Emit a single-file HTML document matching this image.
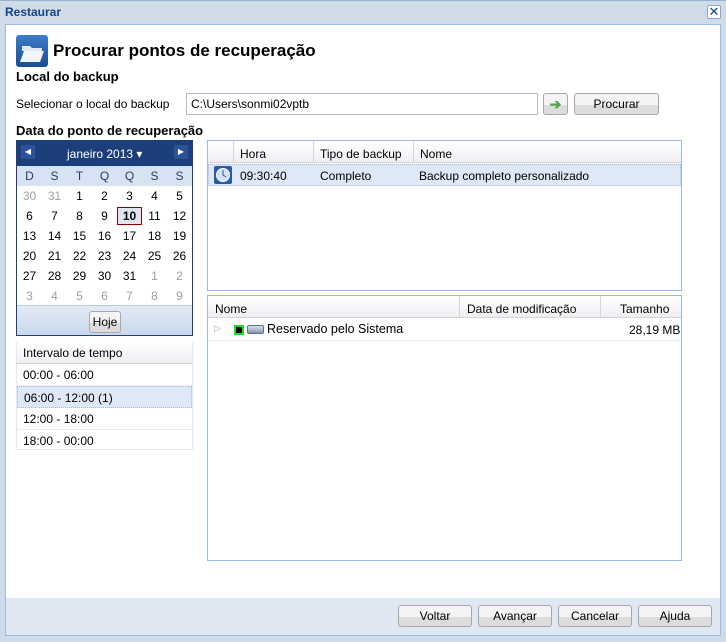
<!DOCTYPE html>
<html><head><meta charset="utf-8"><style>
*{box-sizing:border-box;margin:0;padding:0}
body{width:726px;height:642px;background:#cfdbe7;font-family:"Liberation Sans",sans-serif;font-size:12px;color:#000;position:relative;overflow:hidden}
.a{position:absolute}
.btn{position:absolute;height:22px;border:1px solid #a8a8a8;border-radius:3px;background:linear-gradient(#f6f3f6 0,#f6f3f6 55%,#dcdcdc 55%,#dcdcdc 100%);text-align:center;line-height:21px;font-size:12px}
.hd{background:linear-gradient(#fff,#f1eef3);border-bottom:1px solid #d5d5d5}
.cal td{width:25px;text-align:center;height:20px;font-size:12px}
.g{color:#a0a0a0}
</style></head><body>
<div class="a" style="left:0;top:0;width:726px;height:1px;background:#99b3cf"></div>
<div class="a" style="left:5px;top:5px;font-weight:bold;font-size:12px;color:#15428b">Restaurar</div>
<div class="a" style="left:707px;top:5px;width:14px;height:14px;border:1px solid #8aa6c8;border-radius:2px;background:#fff;color:#15428b;font-size:13px;line-height:11px;text-align:center">✕</div>
<div class="a" style="left:5px;top:24px;width:716px;height:575px;background:#fff;border:1px solid #99bbe8;border-bottom:none"></div>
<div class="a" style="left:5px;top:598px;width:716px;height:38px;background:#dfe8f2;border-left:1px solid #99bbe8;border-right:1px solid #99bbe8;border-bottom:1px solid #99bbe8"></div>
<div class="a" style="left:16px;top:35px;width:32px;height:32px;background:linear-gradient(#3d7cc6,#1b4d92);border-radius:3px"></div>
<svg class="a" style="left:16px;top:35px" width="32" height="32"><path d="M6 11h8l2 2h10v3H6z" fill="#dfe9f6"/><path d="M8 16h20l-4 11H4z" fill="#f2f6fb"/></svg>
<div class="a" style="left:53px;top:41px;font-size:17px;font-weight:bold">Procurar pontos de recuperação</div>
<div class="a" style="left:16px;top:69px;font-size:13px;font-weight:bold">Local do backup</div>
<div class="a" style="left:16px;top:97px">Selecionar o local do backup</div>
<div class="a" style="left:186px;top:93px;width:352px;height:22px;border:1px solid #b5b8c8;padding:3px 4px">C:\Users\sonmi02vptb</div>
<div class="btn" style="left:543px;top:93px;width:25px;color:#4ca84c;font-weight:bold;font-size:14px">➔</div>
<div class="btn" style="left:574px;top:93px;width:85px">Procurar</div>
<div class="a" style="left:16px;top:123px;font-size:13px;font-weight:bold">Data do ponto de recuperação</div>
<div class="a" style="left:16px;top:140px;width:177px;height:196px;border:1px solid #1e3f7a;background:#fff">
 <div style="height:25px;background:#1c3f7c;color:#fff;position:relative">
  <div class="a" style="left:4px;top:4px;width:14px;height:14px;background:#2b5198;font-size:8px;line-height:14px;text-align:center">◀</div>
  <div class="a" style="left:50px;top:6px;font-size:12px">janeiro 2013 ▾</div>
  <div class="a" style="left:157px;top:4px;width:14px;height:14px;background:#2b5198;font-size:8px;line-height:14px;text-align:center">▶</div>
 </div>
 <table class="cal" style="border-collapse:collapse;width:175px">
 <tr style="background:#d7e3f3;color:#233d6d"><td style="height:18px">D</td><td>S</td><td>T</td><td>Q</td><td>Q</td><td>S</td><td>S</td></tr>
 <tr><td class="g">30</td><td class="g">31</td><td>1</td><td>2</td><td>3</td><td>4</td><td>5</td></tr>
 <tr><td>6</td><td>7</td><td>8</td><td>9</td><td><div style="border:1px solid #8b0000;background:#dfe6f0;font-weight:bold;height:18px;line-height:16px">10</div></td><td>11</td><td>12</td></tr>
 <tr><td>13</td><td>14</td><td>15</td><td>16</td><td>17</td><td>18</td><td>19</td></tr>
 <tr><td>20</td><td>21</td><td>22</td><td>23</td><td>24</td><td>25</td><td>26</td></tr>
 <tr><td>27</td><td>28</td><td>29</td><td>30</td><td>31</td><td class="g">1</td><td class="g">2</td></tr>
 <tr><td class="g">3</td><td class="g">4</td><td class="g">5</td><td class="g">6</td><td class="g">7</td><td class="g">8</td><td class="g">9</td></tr>
 </table>
 <div class="a" style="left:0;top:164px;width:175px;height:30px;background:linear-gradient(#e3ebf6,#c9d8ec);border-top:1px solid #b9c9df"></div>
 <div class="btn" style="left:72px;top:170px;width:32px">Hoje</div>
</div>
<div class="a" style="left:16px;top:342px;width:177px;height:108px;border:1px solid #e8e8e8;border-top:none">
 <div class="hd" style="height:22px;padding:4px 6px">Intervalo de tempo</div>
 <div style="height:22px;padding:4px 6px;border-bottom:1px solid #ececec">00:00 - 06:00</div>
 <div style="height:22px;padding:4px 6px;background:#dfe8f6;border:1px dotted #a3bae9">06:00 - 12:00 (1)</div>
 <div style="height:22px;padding:4px 6px;border-bottom:1px solid #ececec">12:00 - 18:00</div>
 <div style="height:21px;padding:4px 6px">18:00 - 00:00</div>
</div>
<div class="a" style="left:207px;top:140px;width:475px;height:151px;border:1px solid #99bbe8"></div>
<div class="a hd" style="left:208px;top:141px;width:473px;height:22px"></div>
<div class="a" style="left:233px;top:141px;width:1px;height:22px;background:#d5d5d5"></div>
<div class="a" style="left:313px;top:141px;width:1px;height:22px;background:#d5d5d5"></div>
<div class="a" style="left:413px;top:141px;width:1px;height:22px;background:#d5d5d5"></div>
<div class="a" style="left:240px;top:147px">Hora</div>
<div class="a" style="left:320px;top:147px">Tipo de backup</div>
<div class="a" style="left:420px;top:147px">Nome</div>
<div class="a" style="left:208px;top:164px;width:473px;height:22px;background:#dfe8f6;border:1px dotted #a3bae9"></div>
<svg class="a" style="left:214px;top:166px" width="18" height="18"><rect width="18" height="18" rx="2" fill="#2b5aa6"/><circle cx="9" cy="9" r="6.5" fill="#cfe0f7" stroke="#fff"/><path d="M9 4v5l3 2" stroke="#2b5aa6" fill="none"/></svg>
<div class="a" style="left:240px;top:169px">09:30:40</div>
<div class="a" style="left:320px;top:169px">Completo</div>
<div class="a" style="left:419px;top:169px">Backup completo personalizado</div>
<div class="a" style="left:207px;top:295px;width:475px;height:266px;border:1px solid #99bbe8"></div>
<div class="a hd" style="left:208px;top:296px;width:473px;height:22px"></div>
<div class="a" style="left:459px;top:296px;width:1px;height:22px;background:#d5d5d5"></div>
<div class="a" style="left:600px;top:296px;width:1px;height:22px;background:#d5d5d5"></div>
<div class="a" style="left:215px;top:302px">Nome</div>
<div class="a" style="left:467px;top:302px">Data de modificação</div>
<div class="a" style="left:620px;top:302px">Tamanho</div>
<div class="a" style="left:208px;top:340px;width:473px;height:1px;background:#ececec"></div>
<div class="a" style="left:214px;top:323px;color:#aaa;font-size:9px">▷</div>
<div class="a" style="left:234px;top:325px;width:10px;height:10px;background:#000;border:2px solid #1ee01e"></div>
<div class="a" style="left:247px;top:325px;width:17px;height:9px;background:linear-gradient(#d8e2ee,#8597ad);border:1px solid #5d6f86;border-radius:2px"></div>
<div class="a" style="left:267px;top:322px;font-size:12.5px">Reservado pelo Sistema</div>
<div class="a" style="left:629px;top:323px">28,19 MB</div>
<div class="btn" style="left:398px;top:605px;width:74px">Voltar</div>
<div class="btn" style="left:478px;top:605px;width:74px">Avançar</div>
<div class="btn" style="left:558px;top:605px;width:74px">Cancelar</div>
<div class="btn" style="left:638px;top:605px;width:74px">Ajuda</div>
</body></html>
